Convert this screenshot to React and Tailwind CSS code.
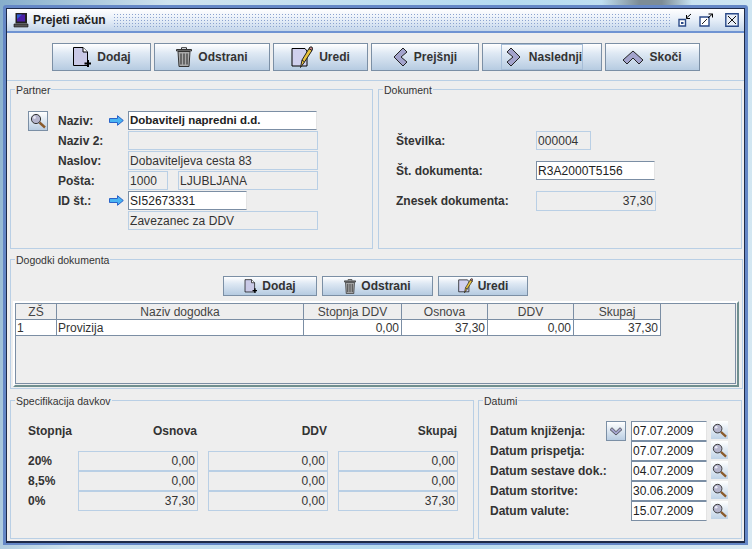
import React from "react";

const dither = "bg-[radial-gradient(circle,#8ba3cf_0.7px,transparent_0.8px)] bg-[length:3px_3px]";

function DocPlus({ className }) {
  return (
    <svg className={className} viewBox="0 0 19 21" fill="none">
      <path d="M1.5 .5H11L15.5 5V18.5H1.5Z" fill="#c9c9e6" stroke="#000" />
      <path d="M11 .5V5H15.5" fill="#fff" stroke="#000" />
      <path d="M16 13v7M12.5 16.5h7" stroke="#000" strokeWidth="2" />
    </svg>
  );
}

function Trash({ className }) {
  return (
    <svg className={className} viewBox="0 0 16 20" fill="none">
      <path d="M5.5 2V.7h5V2" stroke="#333" />
      <path d="M.5 2.5h15V4H.5Z" fill="#999" stroke="#333" />
      <path d="M2 4.5h12l-1 15H3Z" fill="#a9a9a9" stroke="#333" />
      <path d="M5 6.5v11M8 6.5v11M11 6.5v11" stroke="#444" strokeWidth="1.3" />
    </svg>
  );
}

function Pencil({ className }) {
  return (
    <svg className={className} viewBox="0 0 22 23" fill="none">
      <path d="M1 2.5H14L16 5V20H1Z" fill="#d0d0ee" stroke="#000" />
      <path d="M9.5 21.5L11 14L18 2.5L21 4.5L13.5 16Z" fill="#e8c23c" stroke="#222" />
      <path d="M18 2.5L19 1H21L21.5 3L21 4.5Z" fill="#d88f8f" stroke="#222" />
      <path d="M11 14L13.5 16" stroke="#222" />
    </svg>
  );
}

function Chevron({ dir, className }) {
  const pts = {
    left: "10,1 14,5 8,10 14,15 10,19 1,10",
    right: "5,1 14,10 5,19 1,15 7,10 1,5",
    up: "10,2 20,11 16,15 10,9 4,15 0,11",
    down: "3,4 9,10 15,4 18,7 9,15 0,7",
  };
  return (
    <svg className={className} viewBox={dir === "up" ? "0 0 20 16" : dir === "down" ? "0 0 18 18" : "0 0 15 20"}>
      <polygon points={pts[dir]} fill="#a3a3cc" stroke="#222" strokeWidth="1" />
    </svg>
  );
}

function Lens({ className }) {
  return (
    <svg className={className} viewBox="0 0 16 16" fill="none">
      <path d="M9.5 9.5L15 14.5" stroke="#8a5a2b" strokeWidth="2.4" />
      <circle cx="6" cy="6" r="4.6" fill="#b4b4cc" stroke="#333" />
      <circle cx="4.5" cy="4.5" r="1.4" fill="#e8e8f4" />
    </svg>
  );
}

function Arrow() {
  return (
    <svg className="mt-[4px] w-[15px] h-[11px] shrink-0" viewBox="0 0 15 11">
      <path d="M.5 3.5H8.5V.7L14.3 5.5L8.5 10.3V7.5H.5Z" fill="#49b4f2" stroke="#2a62c8" />
    </svg>
  );
}

function WindowIcon() {
  return (
    <svg className="w-[16px] h-[16px] shrink-0" viewBox="0 0 16 16">
      <path d="M2.5 1H14V11.5H2.5Z" fill="#222" />
      <path d="M4 2.5H12V9.5H4Z" fill="#4a1fa8" />
      <path d="M4 2.5H9L4 7Z" fill="#2f5fd0" />
      <path d="M1 12H15V15H1Z" fill="#555" stroke="#111" strokeWidth=".6" />
    </svg>
  );
}

function ToolButton({ w, Icon, iconClass, children, focus }) {
  const inner = (
    <>
      <Icon className={iconClass} />
      <span>{children}</span>
    </>
  );
  return (
    <button
      className="h-[28px] shrink-0 flex items-center justify-center gap-[6px] border border-[#7b8fa5] bg-[linear-gradient(#ffffff,#dfe9f4_35%,#b6cbe1)] text-[12px] font-bold text-[#333]"
      style={{ width: w }}
    >
      {focus ? (
        <span className="h-[26px] flex items-center gap-[8px] border border-[#a6bdd7] pl-[4px]">{inner}</span>
      ) : (
        inner
      )}
    </button>
  );
}

function SmallButton({ w, Icon, iconClass, children }) {
  return (
    <button
      className="h-[20px] shrink-0 flex items-center justify-center gap-[5px] border border-[#7b8fa5] bg-[linear-gradient(#ffffff,#dfe9f4_35%,#b6cbe1)] text-[12px] font-bold text-[#333]"
      style={{ width: w }}
    >
      <Icon className={iconClass} />
      <span>{children}</span>
    </button>
  );
}

function Group({ title, className, children }) {
  return (
    <div className={`relative border border-[#b9cfe5] ${className}`}>
      <span className="absolute left-[4px] top-[-7px] bg-[#eeeeee] px-[1px] text-[10.5px] leading-[14px] text-[#333]">
        {title}
      </span>
      {children}
    </div>
  );
}

function ReadField({ w, h = 19, right, children }) {
  return (
    <div
      className={`shrink-0 border border-[#b9cfe5] px-[1px] flex items-center text-[12px] tracking-[0.05px] text-[#333] ${right ? "justify-end pr-[2px]" : ""}`}
      style={{ width: w, height: h }}
    >
      {children}
    </div>
  );
}

function EditField({ w, h = 19, bold, children }) {
  return (
    <div
      className={`shrink-0 bg-white border border-r-[#e4e4e4] border-t-[#7b8ea4] border-l-[#7b8ea4] border-b-[#7b8ea4] px-[1px] flex items-center text-[#222] ${bold ? "text-[11.5px] font-bold" : "text-[12px] tracking-[0.05px]"}`}
      style={{ width: w, height: h }}
    >
      {children}
    </div>
  );
}

function Label({ w, children }) {
  return (
    <span className="shrink-0 whitespace-nowrap text-[12px] leading-[20px] font-bold text-[#333]" style={{ width: w }}>
      {children}
    </span>
  );
}

function PartnerRow({ label, arrow, children }) {
  return (
    <div className="h-[20px] flex items-start">
      <Label w={51}>{label}</Label>
      <span className="w-[19px] shrink-0">{arrow && <Arrow />}</span>
      {children}
    </div>
  );
}

const cols = ["w-[41px]", "w-[247px]", "w-[98px]", "w-[86px]", "w-[86px]", "w-[87px]"];
const headers = ["ZŠ", "Naziv dogodka", "Stopnja DDV", "Osnova", "DDV", "Skupaj"];
const row = ["1", "Provizija", "0,00", "37,30", "0,00", "37,30"];

function EventTable() {
  return (
    <div className="ml-[2px] mr-[3px] mt-[5px] h-[86px] border-2 border-t-white border-l-white border-r-[#6f8f8f] border-b-[#6f8f8f] pr-[1px] pb-[1px]">
      <div className="h-full border border-[#7b8ea4]">
        <div className="flex h-[16px] w-[645px]">
          {headers.map((h, i) => (
            <div key={h} className={`${cols[i]} border-r border-b border-[#7b8ea4] text-center text-[12px] leading-[16px] text-[#444]`}>
              {h}
            </div>
          ))}
        </div>
        <div className="flex h-[16px] w-[645px] bg-white">
          {row.map((c, i) => (
            <div
              key={i}
              className={`${cols[i]} border-r border-b border-[#7b8ea4] px-[1px] text-[12px] leading-[16px] text-[#333] ${i > 1 ? "text-right pr-[2px]" : ""}`}
            >
              {c}
            </div>
          ))}
        </div>
      </div>
    </div>
  );
}

const taxRows = [
  ["20%", "0,00", "0,00", "0,00"],
  ["8,5%", "0,00", "0,00", "0,00"],
  ["0%", "37,30", "0,00", "37,30"],
];

const dates = [
  ["Datum knjiženja:", "07.07.2009"],
  ["Datum prispetja:", "07.07.2009"],
  ["Datum sestave dok.:", "04.07.2009"],
  ["Datum storitve:", "30.06.2009"],
  ["Datum valute:", "15.07.2009"],
];

export default function App() {
  return (
    <div className="w-[752px] h-[549px] overflow-hidden bg-[linear-gradient(90deg,transparent_80%,#7c8c96_85%,#7c8c96_88%,transparent_92%),linear-gradient(100deg,#86aecb,#cfe3ee_20%,#b5dbf0_60%,#d9e9f2)] bg-[length:100%_5px,100%_100%] bg-no-repeat pl-[3px] pr-[4px] pt-[5px] pb-[4px] font-['Liberation_Sans',Arial,sans-serif]">
      <div className="h-full flex flex-col rounded-t-[3px] border-[3px] border-b-[2px] border-[#6487c6]">
        <div className="flex-1 flex flex-col border-x border-t border-b-2 border-[#1d2a48] bg-[#eeeeee]">
          {/* title bar */}
          <div className="h-[24px] shrink-0 flex items-center border-b-2 border-[#6f93d2] bg-[linear-gradient(#ffffff,#e6eef8_50%,#c3d5ea)] pl-[6px] pr-[5px]">
            <WindowIcon />
            <span className="ml-[4px] text-[12px] font-bold text-[#222]">Prejeti račun</span>
            <div className={`ml-[7px] h-[15px] flex-1 ${dither}`} />
            <div className="ml-[6px] flex items-center gap-[7px]">
              <svg className="w-[14px] h-[14px]" viewBox="0 0 14 14" fill="none">
                <path d="M1 6.5H7.5V13H1Z" fill="#fff" stroke="#2b4a88" strokeWidth="1.4" />
                <path d="M3 9H5.5V11H3Z" fill="#2b4a88" />
                <path d="M13 1L8.5 5M8.5 2V5.5H12" stroke="#000" />
              </svg>
              <svg className="w-[14px] h-[14px]" viewBox="0 0 14 14" fill="none">
                <path d="M1 4H10V13H1Z" fill="#fff" stroke="#2b4a88" strokeWidth="1.4" />
                <path d="M3 11L8 6" stroke="#222" />
                <path d="M13.5 1L9 5M9.5 1H13.5V4.5" stroke="#000" />
              </svg>
              <svg className="ml-[5px] w-[14px] h-[14px]" viewBox="0 0 14 14" fill="none">
                <path d="M.8 .8H13.2V13.2H.8Z" fill="#e9eff8" stroke="#2b4a88" strokeWidth="1.4" />
                <path d="M3 3L11 11M11 3L3 11" stroke="#111" />
              </svg>
            </div>
          </div>

          {/* toolbar */}
          <div className="h-[48px] shrink-0 flex gap-[3px] pl-[45px] pt-[10px] border-b border-[#b9cfe5]">
            <ToolButton w={99} Icon={DocPlus} iconClass="w-[19px] h-[21px]">Dodaj</ToolButton>
            <ToolButton w={116} Icon={Trash} iconClass="w-[16px] h-[20px]">Odstrani</ToolButton>
            <ToolButton w={95} Icon={Pencil} iconClass="w-[22px] h-[23px]">Uredi</ToolButton>
            <ToolButton w={108} Icon={(p) => <Chevron dir="left" {...p} />} iconClass="w-[15px] h-[20px]">Prejšnji</ToolButton>
            <ToolButton w={120} focus Icon={(p) => <Chevron dir="right" {...p} />} iconClass="w-[15px] h-[20px]">Naslednji</ToolButton>
            <ToolButton w={95} Icon={(p) => <Chevron dir="up" {...p} />} iconClass="w-[20px] h-[16px]">Skoči</ToolButton>
          </div>

          {/* partner + dokument */}
          <div className="mt-[8px] ml-[3px] flex gap-[5px]">
            <Group title="Partner" className="w-[363px] h-[160px] flex pl-[17px] pt-[21px]">
              <button className="w-[20px] h-[20px] shrink-0 flex items-center justify-center border border-[#7b8fa5] bg-[linear-gradient(#ffffff,#b9cde2)]">
                <Lens className="w-[16px] h-[16px]" />
              </button>
              <div className="ml-[10px]">
                <PartnerRow label="Naziv:" arrow>
                  <EditField w={189} bold>Dobavitelj napredni d.d.</EditField>
                </PartnerRow>
                <PartnerRow label="Naziv 2:">
                  <ReadField w={190} />
                </PartnerRow>
                <PartnerRow label="Naslov:">
                  <ReadField w={190}>Dobaviteljeva cesta 83</ReadField>
                </PartnerRow>
                <PartnerRow label="Pošta:">
                  <ReadField w={40}>1000</ReadField>
                  <span className="w-[10px]" />
                  <ReadField w={140}>LJUBLJANA</ReadField>
                </PartnerRow>
                <PartnerRow label="ID št.:" arrow>
                  <EditField w={119}>SI52673331</EditField>
                </PartnerRow>
                <PartnerRow>
                  <ReadField w={190}>Zavezanec za DDV</ReadField>
                </PartnerRow>
              </div>
            </Group>

            <Group title="Dokument" className="w-[364px] h-[160px] pl-[17px] pt-[41px]">
              <div className="h-[30px] flex items-start">
                <Label w={140}>Številka:</Label>
                <ReadField w={55}>000004</ReadField>
              </div>
              <div className="h-[30px] flex items-start">
                <Label w={140}>Št. dokumenta:</Label>
                <EditField w={119}>R3A2000T5156</EditField>
              </div>
              <div className="h-[30px] flex items-start">
                <Label w={140}>Znesek dokumenta:</Label>
                <ReadField w={120} h={20} right>37,30</ReadField>
              </div>
            </Group>
          </div>

          {/* dogodki */}
          <Group title="Dogodki dokumenta" className="mt-[10px] ml-[3px] w-[733px] h-[130px] pt-[16px]">
            <div className="flex justify-center gap-[5px] pr-[2px]">
              <SmallButton w={94} Icon={DocPlus} iconClass="w-[13px] h-[15px]">Dodaj</SmallButton>
              <SmallButton w={111} Icon={Trash} iconClass="w-[12px] h-[15px]">Odstrani</SmallButton>
              <SmallButton w={90} Icon={Pencil} iconClass="w-[15px] h-[16px]">Uredi</SmallButton>
            </div>
            <EventTable />
          </Group>

          {/* davki + datumi */}
          <div className="mt-[11px] ml-[3px] flex gap-[4px]">
            <Group title="Specifikacija davkov" className="w-[464px] h-[139px] pl-[17px] pt-[21px]">
              <div className="h-[29px] flex text-[12px] leading-[18px] font-bold text-[#333]">
                <span className="w-[50px]">Stopnja</span>
                <span className="w-[120px] text-right pr-[1px]">Osnova</span>
                <span className="w-[130px] text-right pr-[1px]">DDV</span>
                <span className="w-[130px] text-right pr-[1px]">Skupaj</span>
              </div>
              {taxRows.map((r) => (
                <div key={r[0]} className="h-[20px] flex items-start">
                  <Label w={50}>{r[0]}</Label>
                  <ReadField w={120} h={20} right>{r[1]}</ReadField>
                  <span className="w-[10px]" />
                  <ReadField w={120} h={20} right>{r[2]}</ReadField>
                  <span className="w-[10px]" />
                  <ReadField w={120} h={20} right>{r[3]}</ReadField>
                </div>
              ))}
            </Group>

            <Group title="Datumi" className="w-[264px] h-[139px] pl-[11px] pt-[20px]">
              {dates.map(([label, value], i) => (
                <div key={label} className="h-[20px] flex items-start">
                  <Label w={116}>{label}</Label>
                  <span className="w-[25px] shrink-0">
                    {i === 0 && (
                      <button className="w-[20px] h-[20px] flex items-center justify-center border border-[#7b8fa5] bg-[linear-gradient(#ffffff,#b9cde2)]">
                        <Chevron dir="down" className="w-[12px] h-[12px]" />
                      </button>
                    )}
                  </span>
                  <EditField w={76} h={20}>{value}</EditField>
                  <span className="ml-[4px] w-[17px] h-[18px] flex items-center justify-center bg-[linear-gradient(#ffffff,#bfd2e6)]">
                    <Lens className="w-[15px] h-[15px]" />
                  </span>
                </div>
              ))}
            </Group>
          </div>
        </div>
      </div>
    </div>
  );
}
